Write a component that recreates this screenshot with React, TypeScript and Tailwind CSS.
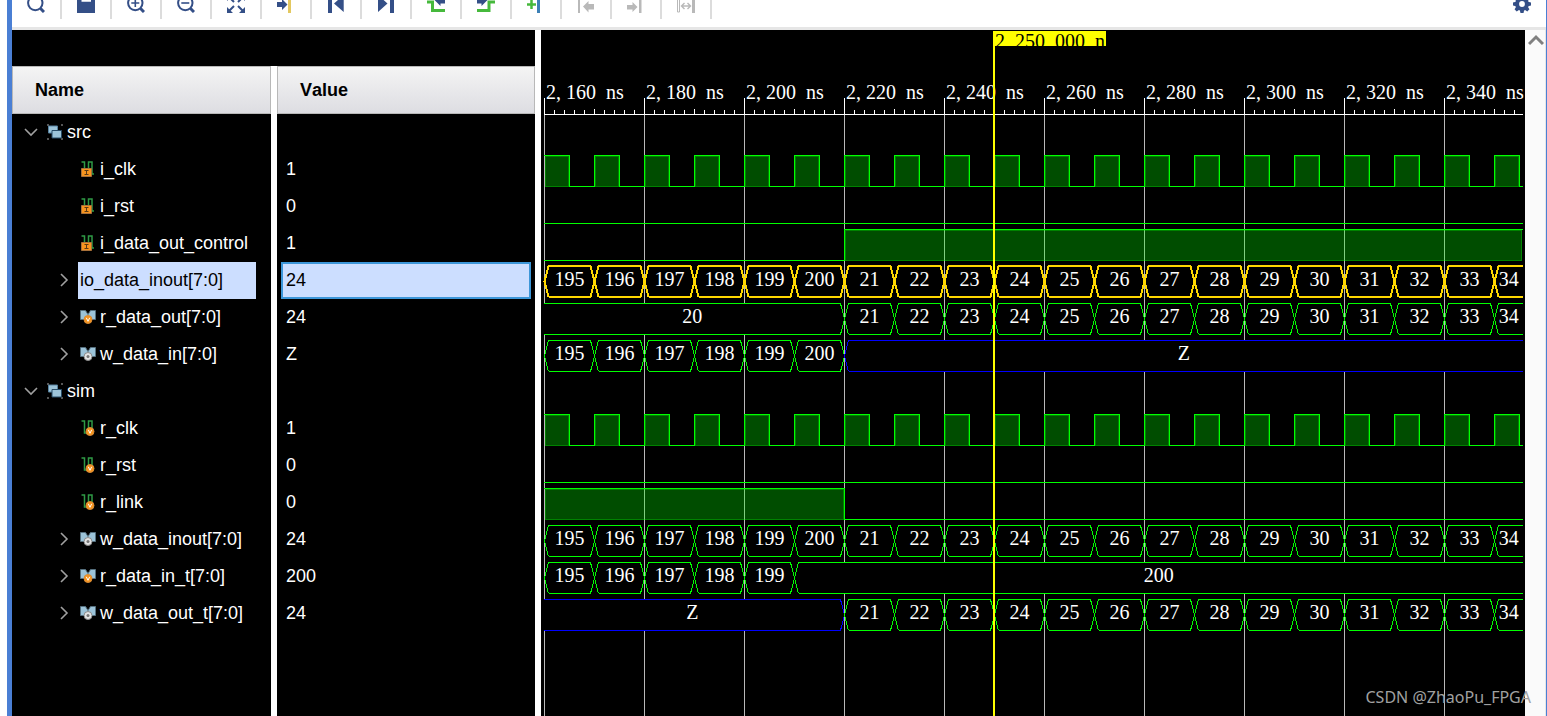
import { useState } from "react";
import type { ReactNode } from "react";

type IconKind = "group" | "input" | "reg" | "busReg" | "busWire" | "busPort";

type BusSegment = { from: number; to: number; value: string };

type Signal = {
  name: string;
  value: string;
  icon: IconKind;
  levels?: [number, number][];
  bus?: BusSegment[];
};

const T_START = 2160;
const PX_PER_NS = 5;
const X_START = 3.5;
const X_END = 982;
const ROW_HEIGHT = 37;
const RULER_Y = 84.5;

const timeToX = (t: number) => X_START + (t - T_START) * PX_PER_NS;

const countUp = (from: number, first: number, count: number): BusSegment[] =>
  Array.from({ length: count }, (_, i) => ({
    from: from + i * 10,
    to: from + (i + 1) * 10,
    value: String(first + i),
  }));

const clock: [number, number][] = Array.from({ length: 20 }, (_, i) => i).flatMap((i) => [
  [T_START + i * 10, 1] as [number, number],
  [T_START + i * 10 + 5, 0] as [number, number],
]);

const signals: Signal[] = [
  { name: "src", value: "", icon: "group" },
  { name: "i_clk", value: "1", icon: "input", levels: clock },
  { name: "i_rst", value: "0", icon: "input", levels: [[2160, 0]] },
  {
    name: "i_data_out_control",
    value: "1",
    icon: "input",
    levels: [
      [2160, 0],
      [2220, 1],
    ],
  },
  {
    name: "io_data_inout[7:0]",
    value: "24",
    icon: "busPort",
    bus: [...countUp(2160, 195, 6), ...countUp(2220, 21, 14)],
  },
  {
    name: "r_data_out[7:0]",
    value: "24",
    icon: "busReg",
    bus: [{ from: 2100, to: 2220, value: "20" }, ...countUp(2220, 21, 14)],
  },
  {
    name: "w_data_in[7:0]",
    value: "Z",
    icon: "busWire",
    bus: [...countUp(2160, 195, 6), { from: 2220, to: 2400, value: "Z" }],
  },
  { name: "sim", value: "", icon: "group" },
  { name: "r_clk", value: "1", icon: "reg", levels: clock },
  { name: "r_rst", value: "0", icon: "reg", levels: [[2160, 0]] },
  {
    name: "r_link",
    value: "0",
    icon: "reg",
    levels: [
      [2160, 1],
      [2220, 0],
    ],
  },
  {
    name: "w_data_inout[7:0]",
    value: "24",
    icon: "busWire",
    bus: [...countUp(2160, 195, 6), ...countUp(2220, 21, 14)],
  },
  {
    name: "r_data_in_t[7:0]",
    value: "200",
    icon: "busReg",
    bus: [...countUp(2160, 195, 5), { from: 2210, to: 2400, value: "200" }],
  },
  {
    name: "w_data_out_t[7:0]",
    value: "24",
    icon: "busWire",
    bus: [{ from: 2100, to: 2220, value: "Z" }, ...countUp(2220, 21, 14)],
  },
];

const NAVY = "#344f87";
const GREEN = "#46b93c";
const GRAY = "#b9b9b9";

const tools: { label: string; disabled?: boolean; art: ReactNode }[] = [
  {
    label: "Search",
    art: (
      <g stroke={NAVY} fill="none">
        <circle cx="8.3" cy="8" r="7.2" strokeWidth="2" />
        <path d="M13.5 13.5L17 17" strokeWidth="3" />
      </g>
    ),
  },
  {
    label: "Save",
    art: <path fill={NAVY} fillRule="evenodd" d="M0 0h18v18H0zM4.5 2h9.5v4.8H4.5z" />,
  },
  {
    label: "Zoom in",
    art: (
      <g stroke={NAVY} fill="none">
        <circle cx="8.3" cy="8" r="7.2" strokeWidth="2" />
        <path d="M4.3 8h8M8.3 4v8" strokeWidth="1.6" />
        <path d="M13.5 13.5L17 17" strokeWidth="3" />
      </g>
    ),
  },
  {
    label: "Zoom out",
    art: (
      <g stroke={NAVY} fill="none">
        <circle cx="8.3" cy="8" r="7.2" strokeWidth="2" />
        <path d="M4.3 8h8" strokeWidth="1.6" />
        <path d="M13.5 13.5L17 17" strokeWidth="3" />
      </g>
    ),
  },
  {
    label: "Zoom fit",
    art: (
      <g>
        <path fill={NAVY} d="M0 0h6L0 6zM18 0v6L12 0zM0 18v-6l6 6zM18 18h-6l6-6z" />
        <path d="M2 2l5 5M16 2l-5 5M2 16l5-5M16 16l-5-5" stroke={NAVY} strokeWidth="2" />
      </g>
    ),
  },
  {
    label: "Go to cursor",
    art: (
      <g>
        <path fill={NAVY} d="M0 7h5V4l5.5 5.5L5 15v-3H0z" />
        <path fill="#e3c860" d="M11 0h3v18h-3z" />
      </g>
    ),
  },
  {
    label: "Go to start",
    art: <path fill={NAVY} d="M1 0h4v18H1zM16.7 0v17L7 8.5z" />,
  },
  {
    label: "Go to end",
    art: <path fill={NAVY} d="M13 0h4v18h-4zM1 0v17l9.5-8.5z" />,
  },
  {
    label: "Previous transition",
    art: (
      <g>
        <path d="M0 7h5.5v8.5H18" fill="none" stroke={GREEN} strokeWidth="3" />
        <path fill={NAVY} d="M7.5 5l6-6v3H18v6.5h-4.5V11z" />
      </g>
    ),
  },
  {
    label: "Next transition",
    art: (
      <g>
        <path d="M0 15.500h12V7h6" fill="none" stroke={GREEN} strokeWidth="3" />
        <path fill={NAVY} d="M10.5 5l-6-6v3H0v6.5h4.5V11z" />
      </g>
    ),
  },
  {
    label: "Add marker",
    art: (
      <g>
        <path d="M0 9.5h9M4.5 5v9" stroke={GREEN} strokeWidth="2.5" />
        <path fill="#3c80b6" d="M10 0h3v18h-3z" />
      </g>
    ),
  },
  {
    label: "Previous marker",
    disabled: true,
    art: <path fill={GRAY} d="M1 0h2v18H1zM6 11.5L11.5 6v3H17v5.500h-5.500v3z" />,
  },
  {
    label: "Next marker",
    disabled: true,
    art: <path fill={GRAY} d="M12 0h2.5v18H12zM10.5 12L5.5 7v3H0v4.5h5.5V17z" />,
  },
  {
    label: "Swap cursors",
    disabled: true,
    art: (
      <g>
        <path d="M.5-2h2v19h-2z" fill="none" stroke={GRAY} />
        <path d="M15 0h3v18h-3z" fill={GRAY} />
        <path
          d="M4.5 11h9M7.5 8l-3 3 3 3M10.5 8l3 3-3 3"
          fill="none"
          stroke={GRAY}
          strokeWidth="1.4"
        />
      </g>
    ),
  },
];

function Toolbar() {
  return (
    <div className="flex h-[30px] shrink-0 items-start justify-between overflow-hidden border-b-[3px] border-[#e6e6e6] bg-white">
      <div className="flex">
        {tools.map((tool) => (
          <button
            key={tool.label}
            aria-label={tool.label}
            disabled={tool.disabled}
            className="flex h-[19px] w-[50px] items-end justify-center border-r-2 border-[#dcdcdc] pb-1.5"
          >
            <svg viewBox="0 0 18 18" className="size-[18px] shrink-0">
              {tool.art}
            </svg>
          </button>
        ))}
      </div>
      <button aria-label="Settings" className="flex h-[19px] items-end pr-[15px] pb-1.5">
        <svg viewBox="0 0 18 18" className="size-[18px] shrink-0">
          <g fill={NAVY}>
            {[0, 45, 90, 135].map((angle) => (
              <path
                key={angle}
                d="M7.5 0h3l.7 3v12l-.7 3h-3l-.7-3V3z"
                transform={`rotate(${angle} 9 9)`}
              />
            ))}
            <circle cx="9" cy="9" r="6.8" />
          </g>
          <circle cx="9" cy="9" r="2.9" fill="#fff" />
        </svg>
      </button>
    </div>
  );
}

function SignalIcon({ kind }: { kind: IconKind }) {
  if (kind === "group") {
    return (
      <svg viewBox="0 0 16 16" className="size-4 shrink-0">
        <path d="M0 0h2v2H0zM14 0h2v2h-2zM0 14h2v2H0zM14 14h2v2h-2z" fill="#555" />
        <path d="M1.5 2h9v7h-9z" fill="#9cc3d8" stroke="#56819f" />
        <path d="M5 6.5h9.5V14H5z" fill="#9cc3d8" stroke="#274b66" />
      </svg>
    );
  }

  if (kind === "input" || kind === "reg") {
    return (
      <svg viewBox="0 0 16 16" className="size-4 shrink-0">
        <path
          d="M1.500 1h3v12h4M8.500 13V1h3.500v12h2"
          fill="none"
          stroke="#2f9a45"
          strokeWidth="1.5"
        />
        {kind === "input" ? (
          <g>
            <path d="M1.5 7.5h10v8h-10z" fill="#f7941e" stroke="#a8713a" />
            <path d="M4.5 9.5h4M6.5 9.5v4M4.5 13.5h4" stroke="#5b3a14" />
          </g>
        ) : (
          <g>
            <circle cx="10" cy="11.5" r="4" fill="#f7941e" stroke="#d78a35" />
            <path d="M8.3 9.8l1.7 3.5 1.7-3.5" fill="none" stroke="#fff" />
          </g>
        )}
      </svg>
    );
  }

  return (
    <svg viewBox="0 0 16 16" className="size-4 shrink-0">
      <path
        d="M.5 1.5h5l2.5 4 2.5-4h5v9h-5L8 7l-2.5 3.5h-5z"
        fill="#9cc3d8"
        stroke="#56707f"
      />
      {kind === "busReg" ? (
        <g>
          <circle cx="8" cy="10.5" r="4" fill="#f7941e" stroke="#d78a35" />
          <path d="M6.3 8.8L8 12.3l1.7-3.5" fill="none" stroke="#fff" />
        </g>
      ) : (
        <g>
          <circle cx="8" cy="10.5" r="4" fill="#e4e4e4" stroke="#8a8a8a" />
          <circle cx="8" cy="10.5" r="1.5" fill="#777" />
        </g>
      )}
    </svg>
  );
}

function Chevron({ open }: { open: boolean }) {
  return (
    <svg viewBox="0 0 16 16" className="size-4" fill="none" stroke="#a0a0a0" strokeWidth="1.6">
      <path d={open ? "M2 5l6 6 6-6" : "M5 2l6 6-6 6"} />
    </svg>
  );
}

function SignalTable({
  selected,
  onSelect,
}: {
  selected: string;
  onSelect: (name: string) => void;
}) {
  return (
    <table className="h-full w-full table-fixed border-separate border-spacing-0">
      <thead>
        <tr className="h-12 text-left">
          <th className="w-[259px] border border-[#b8b8b8] bg-linear-to-b from-[#f4f4f4] to-[#dddde2] p-0 pl-[22px] font-bold">
            Name
          </th>
          <th className="border-l-[6px] border-white p-0 font-bold">
            <div className="flex h-12 items-center border border-[#b8b8b8] bg-linear-to-b from-[#f4f4f4] to-[#dddde2] pl-[22px]">
              Value
            </div>
          </th>
        </tr>
      </thead>
      <tbody className="text-white">
        {signals.map((signal) => {
          const isGroup = signal.icon === "group";
          const isSelected = signal.name === selected;
          return (
            <tr key={signal.name} className="h-[37px]" onClick={() => onSelect(signal.name)}>
              <td className="p-0">
                <div
                  className={`flex h-[37px] items-center pb-0.5 ${isGroup ? "pl-[11px]" : "pl-11"}`}
                >
                  {isGroup || signal.bus ? (
                    <button aria-label={`Expand ${signal.name}`} className="size-4 shrink-0">
                      <Chevron open={isGroup} />
                    </button>
                  ) : (
                    <span className="size-4 shrink-0" />
                  )}
                  {isSelected ? (
                    <span className="ml-1.5 flex h-[37px] w-[178px] items-center self-start bg-[#ccdeff] pb-0.5 pl-0.5 text-black">
                      {signal.name}
                    </span>
                  ) : (
                    <span className="ml-2 flex items-center gap-1">
                      <SignalIcon kind={signal.icon} />
                      {signal.name}
                    </span>
                  )}
                </div>
              </td>
              <td className="border-l-[6px] border-white p-0">
                <div
                  className={`mx-1 flex h-[37px] items-center border-2 pb-0.5 pl-[3px] ${
                    isSelected ? "border-[#3c96d8] bg-[#ccdeff] text-black" : "border-transparent"
                  }`}
                >
                  {signal.value}
                </div>
              </td>
            </tr>
          );
        })}
        <tr>
          <td className="p-0" />
          <td className="border-l-[6px] border-white p-0" />
        </tr>
      </tbody>
    </table>
  );
}

function DigitalTrace({ levels, top }: { levels: [number, number][]; top: number }) {
  const high = top + 4.5;
  const low = top + 35.5;
  let path = "";
  const boxes: { x: number; width: number }[] = [];

  levels.forEach(([t, level], i) => {
    const x = timeToX(t);
    const next = i + 1 < levels.length ? Math.min(timeToX(levels[i + 1][0]), X_END) : X_END;
    if (x >= X_END) return;
    const y = level ? high : low;
    path += i === 0 ? `M${x - 0.5} ${y}` : `V${y}`;
    path += `H${next}`;
    if (level) boxes.push({ x: x + 1, width: Math.floor(next - x - 2) });
  });

  return (
    <g>
      {boxes.map((box) => (
        <g key={box.x}>
          <rect
            x={box.x - 0.5}
            y={high + 0.5}
            width={box.width + 1}
            height={31}
            fill="#00ff00"
            fillOpacity="0.3"
          />
          <rect
            x={box.x}
            y={high + 1}
            width={box.width}
            height={30}
            fill="none"
            stroke="#00ff00"
            strokeOpacity="0.3"
          />
        </g>
      ))}
      <path d={path} fill="none" stroke="#00ff00" />
    </g>
  );
}

function BusTrace({
  segments,
  top,
  selected,
}: {
  segments: BusSegment[];
  top: number;
  selected: boolean;
}) {
  const high = selected ? top + 4 : top + 4.5;
  const low = selected ? top + 35 : top + 35.5;
  const middle = (high + low) / 2;

  return (
    <g>
      {segments.map((segment) => {
        // values that run past the visible range get a flat, open end
        const openLeft = segment.from < T_START;
        const openRight = timeToX(segment.to) > X_END;
        const left = openLeft ? X_START - 0.5 : timeToX(segment.from);
        const right = openRight ? X_END : timeToX(segment.to);
        const start = openLeft ? left : left + 4;
        const end = openRight ? right : right - 4;
        const center = (left + (openLeft ? end : right)) / 2;
        const leftSide = openLeft
          ? `M${left} ${high}`
          : `M${start} ${low}L${left} ${middle}L${start} ${high}`;
        const rightSide = openRight
          ? `H${end}M${end} ${low}`
          : `H${end}L${right} ${middle}L${end} ${low}`;
        const color = selected ? "#ffd700" : segment.value === "Z" ? "#0000ff" : "#00ff00";
        return (
          <g key={segment.from}>
            <polygon
              points={`${start},${low} ${left},${middle} ${start},${high} ${end},${high} ${right},${middle} ${end},${low}`}
              fill="#000"
            />
            <path
              d={`${leftSide}${rightSide}H${start}`}
              fill="none"
              stroke={color}
              strokeWidth={selected ? 2 : 1}
            />
            <text x={center} y={top + 24} textAnchor="middle" fill="#fff">
              {segment.value}
            </text>
          </g>
        );
      })}
    </g>
  );
}

function Waveform({ selected }: { selected: string }) {
  const majors = Array.from({ length: 10 }, (_, i) => T_START + i * 20);
  const minors = Array.from({ length: 98 }, (_, i) => T_START + i * 2);

  return (
    <svg
      className="block h-full w-full font-['Liberation_Serif',serif] text-[20px]"
      shapeRendering="crispEdges"
    >
      <g stroke="#b9b9b9">
        {majors.map((t) => (
          <line key={t} x1={timeToX(t)} x2={timeToX(t)} y1={RULER_Y} y2="100%" />
        ))}
      </g>

      <g stroke="#fff">
        <line x1={X_START - 0.5} x2={X_END} y1={RULER_Y} y2={RULER_Y} />
        {minors.map((t) => (
          <line
            key={t}
            x1={timeToX(t)}
            x2={timeToX(t)}
            y1={t % 20 === 0 ? 68 : t % 10 === 0 ? 79 : 80}
            y2={RULER_Y}
          />
        ))}
      </g>
      <g fill="#fff">
        {majors.map((t) => (
          <text key={t} x={timeToX(t) + 1.5} y="69" className="whitespace-pre">
            {`${t.toLocaleString("en-US").replace(",", ", ")}  ns`}
          </text>
        ))}
      </g>

      {signals.map((signal, i) => {
        const top = 84 + i * ROW_HEIGHT;
        if (signal.levels) {
          return <DigitalTrace key={signal.name} levels={signal.levels} top={top} />;
        }
        if (signal.bus) {
          return (
            <BusTrace
              key={signal.name}
              segments={signal.bus}
              top={top}
              selected={signal.name === selected}
            />
          );
        }
        return null;
      })}

      {/* main cursor */}
      <rect x="452" y="1" width="2" height="100%" fill="#ff0" />
      <svg x="452" y="1" width="113" height="15">
        <rect width="113" height="15" fill="#ff0" />
        <text x="2" y="17" className="whitespace-pre" fill="#000">
          {"2, 250, 000  n"}
        </text>
      </svg>
    </svg>
  );
}

export default function App() {
  const [selected, setSelected] = useState("io_data_inout[7:0]");

  return (
    <div className="h-screen overflow-hidden bg-white pl-[7px] font-['Liberation_Sans',Arial,sans-serif] text-[18px] leading-6 text-black [font-kerning:none]">
      <div className="relative flex h-full flex-col border-r border-l-[5px] border-r-[#4a7fd4] border-l-[#4a7fd4]">
        <Toolbar />
        <div className="flex min-h-0 flex-1 gap-1.5">
          <div className="flex w-[523px] shrink-0 flex-col bg-black pt-9">
            <div className="min-h-0 flex-1">
              <SignalTable selected={selected} onSelect={setSelected} />
            </div>
          </div>
          <div className="flex min-w-0 flex-1">
            <div className="min-w-0 flex-1 overflow-hidden bg-black">
              <Waveform selected={selected} />
            </div>
            <div className="w-[21px] shrink-0 border-r border-[#e6e6e6] bg-[#fafafa] pt-[3px] pl-[3px]">
              <button aria-label="Scroll up" className="block size-4">
                <svg
                  viewBox="0 0 16 16"
                  className="size-4"
                  fill="none"
                  stroke="#808080"
                  strokeWidth="3"
                >
                  <path d="M1 11l7-7 7 7" />
                </svg>
              </button>
            </div>
          </div>
        </div>
        <span className="absolute right-[15px] bottom-[7px] font-['Noto_Sans',sans-serif] text-[16px] text-[#a0a0a0]">
          CSDN @ZhaoPu_FPGA
        </span>
      </div>
    </div>
  );
}
